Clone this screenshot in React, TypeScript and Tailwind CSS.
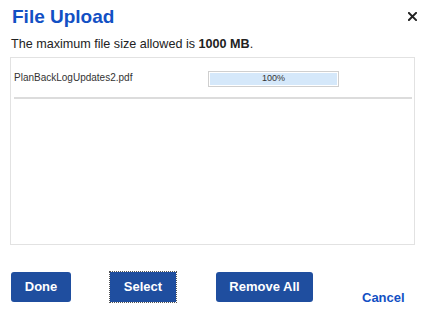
import React from 'react';

export default function App() {
  return (
    <div className="w-[430px] h-[324px] bg-white overflow-hidden" style={{ fontFamily: '"Liberation Sans", Arial, sans-serif' }}>
      <div className="flex items-start justify-between pl-[12px] pr-[13px] pt-[4px]">
        <h1 className="text-[19px] leading-[25px] font-bold text-[#1250c4]">File Upload</h1>
        <button className="mt-[8px] text-[#222]" aria-label="Close">
          <svg width="9" height="9" viewBox="0 0 10 10">
            <path d="M1 1 L9 9 M9 1 L1 9" stroke="currentColor" strokeWidth="2.2" strokeLinecap="square" />
          </svg>
        </button>
      </div>

      <p className="mt-[7px] pl-[11px] text-[12.6px] leading-[16px] text-[#222]">
        The maximum file size allowed is <span className="font-bold">1000 MB</span>.
      </p>

      <div className="mt-[5px] ml-[10px] w-[405px] h-[188px] border border-[#e2e2e2]">
        <div className="flex items-center h-[39px] pl-[3px] mr-[1px]">
          <span className="text-[10px] text-[#333] w-[194px]">PlanBackLogUpdates2.pdf</span>
          <div className="w-[131px] h-[16px] border border-[#cfcfcf] p-[1px] bg-white mt-[2px]">
            <div className="w-full h-full bg-[#d5e8fa] flex items-center justify-center text-[9px] text-[#333]">100%</div>
          </div>
        </div>
        <div className="ml-[3px] mr-[2px] h-[2px] bg-[#dcdcdc]" />
      </div>

      <div className="flex items-start pl-[11px] mt-[27px]">
        <button className="w-[60px] h-[30px] rounded-[3px] bg-[#1f4e9f] text-white text-[13px] font-bold">Done</button>
        <button className="ml-[39px] w-[66px] h-[30px] bg-[#1f4e9f] text-white text-[13px] font-bold outline outline-1 outline-dotted outline-[#555]">Select</button>
        <button className="ml-[40px] w-[97px] h-[30px] rounded-[3px] bg-[#1f4e9f] text-white text-[13px] font-bold">Remove All</button>
        <button className="ml-[49px] mt-[16px] text-[13px] font-bold text-[#1250c4]">Cancel</button>
      </div>
    </div>
  );
}
